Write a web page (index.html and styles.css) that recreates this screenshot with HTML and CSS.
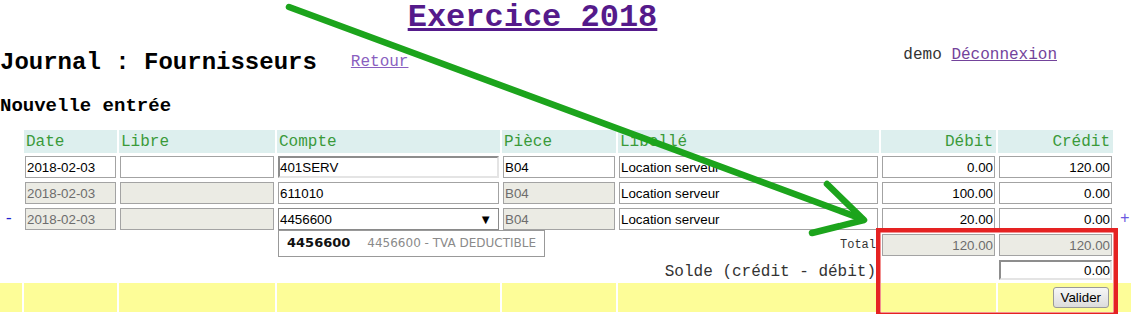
FILE: index.html
```html
<!DOCTYPE html>
<html lang="fr">
<head>
    <meta charset="UTF-8">
    <title>Exercice 2018 - Journal Fournisseurs</title>
    <link rel="stylesheet" href="styles.css">
</head>
<body>
    <h1 class="exercice"><a href="#">Exercice 2018</a></h1>

    <div class="topbar">
        <div class="journal">
            <h2>Journal : Fournisseurs</h2>
            <a class="retour" href="#">Retour</a>
        </div>
        <div class="user">demo <a href="#">Déconnexion</a></div>
    </div>

    <h3 class="nouvelle">Nouvelle entrée</h3>

    <!-- Saisie des lignes d'ecriture -->
    <table class="ecriture">
        <colgroup>
            <col style="width: 22px">
            <col style="width: 93px">
            <col style="width: 156px">
            <col style="width: 223px">
            <col style="width: 114px">
            <col style="width: 261px">
            <col style="width: 115px">
            <col style="width: 115px">
            <col style="width: 16px">
        </colgroup>
        <thead>
            <tr>
                <th class="vide"></th>
                <th>Date</th>
                <th>Libre</th>
                <th>Compte</th>
                <th>Pièce</th>
                <th>Libellé</th>
                <th class="num">Débit</th>
                <th class="num">Crédit</th>
                <th class="vide"></th>
            </tr>
        </thead>
        <tbody>
            <tr class="ligne">
                <td></td>
                <td><input type="text" value="2018-02-03"></td>
                <td><input type="text" value=""></td>
                <td><input type="text" class="focus" value="401SERV"></td>
                <td><input type="text" value="B04"></td>
                <td><input type="text" value="Location serveur"></td>
                <td><input type="text" class="num" value="0.00"></td>
                <td><input type="text" class="num" value="120.00"></td>
                <td></td>
            </tr>
            <tr class="ligne">
                <td></td>
                <td><input type="text" value="2018-02-03" disabled></td>
                <td><input type="text" value="" disabled></td>
                <td><input type="text" value="611010"></td>
                <td><input type="text" value="B04" disabled></td>
                <td><input type="text" value="Location serveur"></td>
                <td><input type="text" class="num" value="100.00"></td>
                <td><input type="text" class="num" value="0.00"></td>
                <td></td>
            </tr>
            <tr class="ligne">
                <td><a class="moins" href="#">-</a></td>
                <td><input type="text" value="2018-02-03" disabled></td>
                <td><input type="text" value="" disabled></td>
                <td>
                    <div class="compte-wrap">
                        <div class="combo"><span>4456600</span><span class="fleche">▼</span></div>
                        <div class="suggestions">
                            <b>4456600</b><span>4456600 - TVA DEDUCTIBLE</span>
                        </div>
                    </div>
                </td>
                <td><input type="text" value="B04" disabled></td>
                <td><input type="text" value="Location serveur"></td>
                <td><input type="text" class="num" value="20.00"></td>
                <td><input type="text" class="num" value="0.00"></td>
                <td><a class="plus" href="#">+</a></td>
            </tr>
            <tr class="ligne total">
                <td colspan="6" class="label">Total</td>
                <td><input type="text" class="num" value="120.00" disabled></td>
                <td><input type="text" class="num" value="120.00" disabled></td>
                <td></td>
            </tr>
            <tr class="solde">
                <td colspan="6" class="label">Solde (crédit - débit)</td>
                <td></td>
                <td><input type="text" class="num focus" value="0.00"></td>
                <td></td>
            </tr>
            <tr class="actions">
                <td></td>
                <td></td>
                <td></td>
                <td></td>
                <td></td>
                <td></td>
                <td></td>
                <td class="valider"><button type="button">Valider</button></td>
                <td></td>
            </tr>
        </tbody>
    </table>

    <!-- Annotation: fleche verte + cadre rouge -->
    <svg class="annotation" width="1131" height="323" viewBox="0 0 1131 323">
        <path d="M289 7 L862 219" stroke="#1ca41c" stroke-width="6.5" stroke-linecap="round" fill="none"/>
        <path d="M827 184 L864 220 L812 233" stroke="#1ca41c" stroke-width="6.5" stroke-linecap="round" stroke-linejoin="round" fill="none"/>
        <rect x="878.25" y="230.25" width="237.5" height="84.5" stroke="#e52222" stroke-width="4.5" fill="none"/>
    </svg>
</body>
</html>
```

FILE: styles.css
```css
/* Base */
* {
    box-sizing: border-box;
}
html, body {
    overflow: hidden;
}
body {
    margin: 0;
    position: relative;
    font-family: "Liberation Mono", "Courier New", monospace;
    color: #000;
    background: #fff;
}
a {
    color: #551a8b;
}

/* Titre */
.exercice {
    margin: 0;
    width: 1065px;
    height: 36px;
    font-size: 32px;
    line-height: 36px;
    text-align: center;
}

.topbar {
    display: flex;
    align-items: flex-start;
    margin-top: 8px;
}
.journal {
    display: flex;
    align-items: baseline;
    padding-top: 5px;
}
.journal h2 {
    margin: 0;
    font-size: 24px;
    line-height: 28px;
}
.retour {
    position: relative;
    top: -3px;
    margin-left: 34px;
    font-size: 16px;
    color: #8a5fc0;
}
.user {
    margin-left: auto;
    margin-right: 74px;
    padding-top: 2px;
    font-size: 16px;
    line-height: 18px;
    color: #333;
}
.user a {
    color: #73439b;
}

.nouvelle {
    margin: 18px 0 0;
    font-size: 19px;
    line-height: 22px;
}

/* Tableau d'ecriture */
.ecriture {
    table-layout: fixed;
    width: 1135px;
    margin: 11px 0 0 -2px;
    border-spacing: 2px;
}
.ecriture th {
    height: 23px;
    padding: 0 2px;
    background: #ddefee;
    color: #3a9a3a;
    font-size: 16px;
    font-weight: normal;
    text-align: left;
    white-space: nowrap;
}
.ecriture th.num {
    text-align: right;
    padding-right: 3px;
}
.ecriture th.vide {
    background: none;
}
.ecriture td {
    padding: 1px;
    vertical-align: middle;
}
.ligne td {
    height: 24px;
}

input {
    display: block;
    width: 100%;
    height: 22px;
    margin: 0;
    padding: 0 1px;
    border: 1px solid #a3a3a3;
    background: #fff;
    color: #000;
    font-family: "Liberation Sans", Arial, sans-serif;
    font-size: 13.33px;
}
input.num {
    text-align: right;
}
input:disabled {
    background: #ebebe4;
    color: #6d6d6d;
}
input.focus {
    border-width: 2px;
    border-style: solid;
    border-color: #8d8d8d #e4e4e4 #e4e4e4 #8d8d8d;
    padding: 0;
}

/* Compte avec autocompletion */
.compte-wrap {
    position: relative;
}
.combo {
    display: flex;
    justify-content: space-between;
    align-items: center;
    height: 22px;
    padding: 0 6px 0 1px;
    border: 1px solid #8a8a8a;
    background: #fff;
    font-family: "Liberation Sans", Arial, sans-serif;
    font-size: 13.33px;
}
.fleche {
    font-size: 13px;
}
.suggestions {
    position: absolute;
    top: 100%;
    left: 0;
    z-index: 2;
    display: flex;
    align-items: center;
    gap: 17px;
    width: 267px;
    height: 27px;
    padding: 0 8px 2px;
    border: 1px solid #999;
    background: #fff;
    font-family: "DejaVu Sans", Verdana, sans-serif;
    white-space: nowrap;
}
.suggestions b {
    font-size: 13px;
    color: #111;
}
.suggestions span {
    font-size: 12px;
    color: #8a8a8a;
}

.moins, .plus {
    font-size: 16px;
    text-decoration: none;
    color: #2020d0;
}
.moins {
    padding-left: 3px;
}
.plus {
    padding-left: 4px;
    color: #6a5ae0;
}

.total .label {
    text-align: right;
    padding-right: 3px;
    font-size: 12px;
    color: #333;
}
.solde td {
    height: 22px;
}
.solde .label {
    text-align: right;
    padding: 3px 3px 0 1px;
    font-size: 16px;
    color: #333;
}
.solde input {
    height: 20px;
}

.actions td {
    height: 29px;
    background: #fdfd98;
}
.actions .valider {
    text-align: right;
    padding-right: 4px;
}
.valider button {
    height: 21px;
    padding: 0 7px;
    border: 1px solid #999;
    border-radius: 3px;
    background: linear-gradient(#f7f7f7, #dcdcdc);
    font-family: "Liberation Sans", Arial, sans-serif;
    font-size: 13.33px;
    color: #000;
}

/* Annotation sopra la pagina */
.annotation {
    position: absolute;
    top: 0;
    left: 0;
    pointer-events: none;
}
```
